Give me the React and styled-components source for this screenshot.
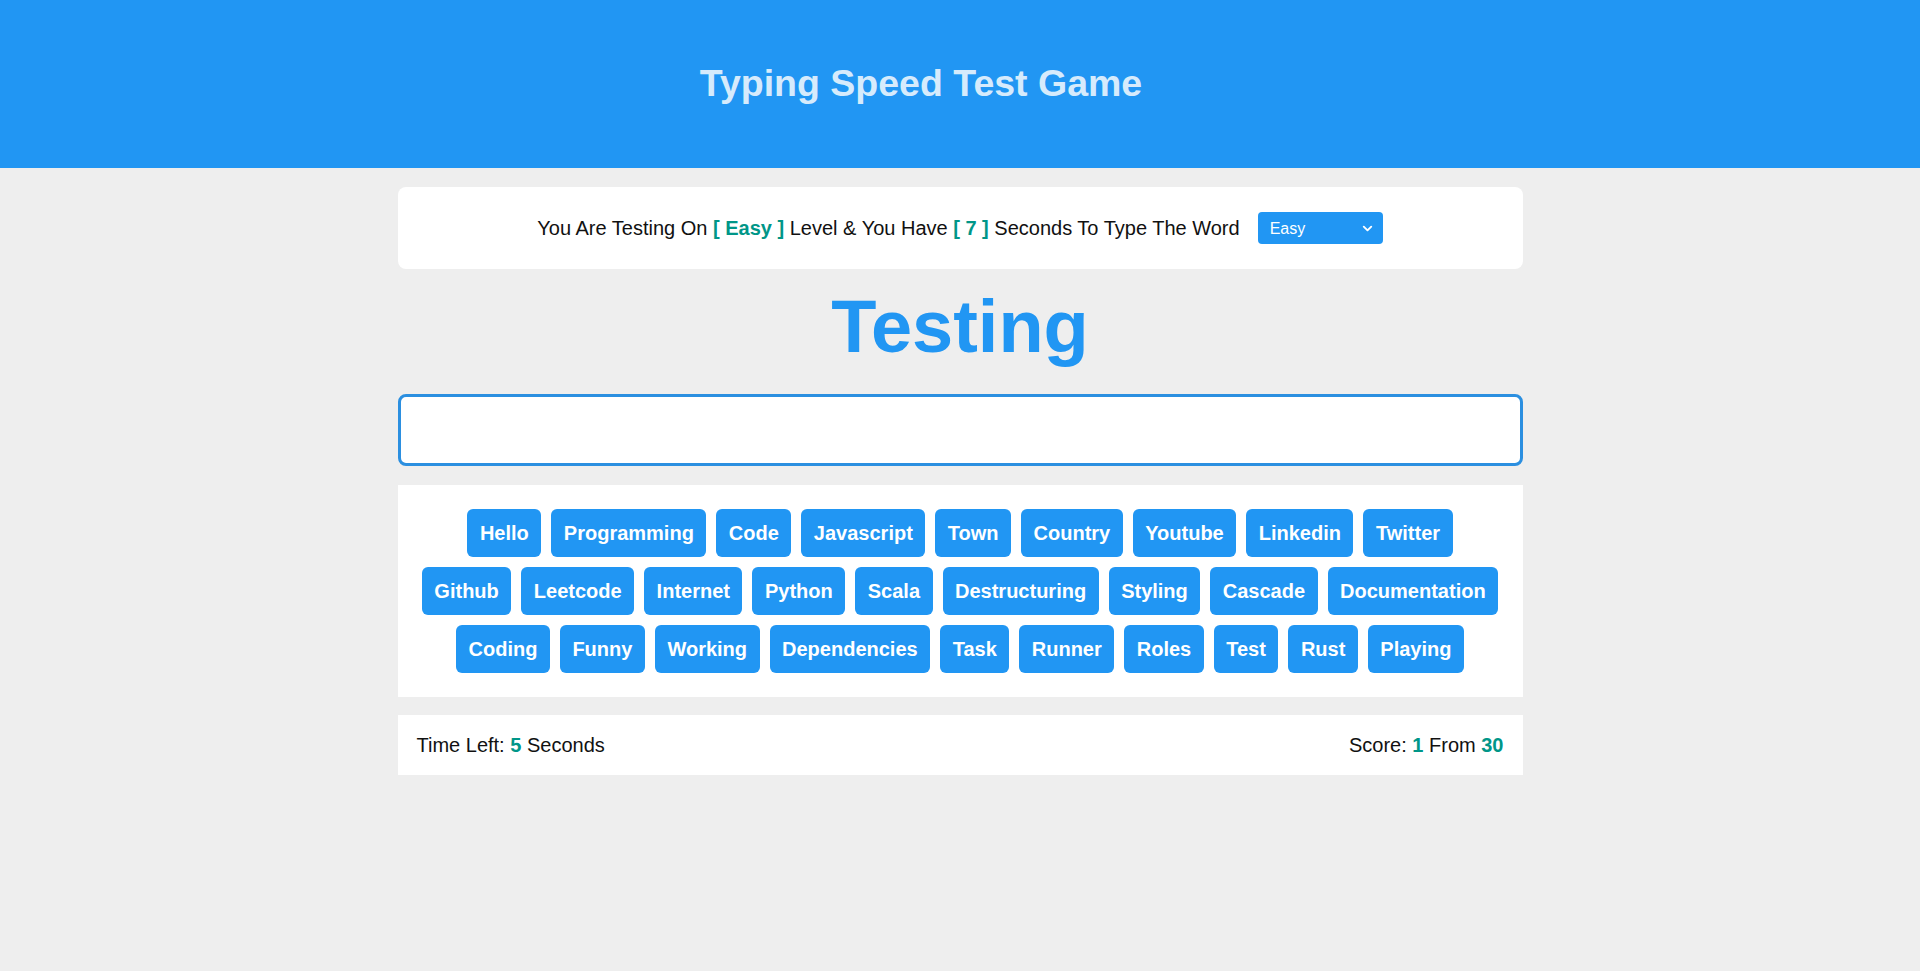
import styled, { createGlobalStyle } from "styled-components";
import { ChevronDown } from "lucide-react";

const FONT = '"Liberation Sans", Arial, Helvetica, sans-serif';

const rows = [
    ["Hello", "Programming", "Code", "Javascript", "Town", "Country", "Youtube", "Linkedin", "Twitter"],
    ["Github", "Leetcode", "Internet", "Python", "Scala", "Destructuring", "Styling", "Cascade", "Documentation"],
    ["Coding", "Funny", "Working", "Dependencies", "Task", "Runner", "Roles", "Test", "Rust", "Playing"],
];

const App = () => {
    return (
        <>
            <GlobalStyle />
            <Header>
                <Title>Typing Speed Test Game</Title>
            </Header>
            <Container>
                <MessageCard>
                    <span>
                        You Are Testing On <Mark>[ Easy ]</Mark> Level &amp; You Have <Mark>[ 7 ]</Mark> Seconds To Type The Word
                    </span>
                    <SelectWrap>
                        <LevelSelect defaultValue="easy">
                            <option value="easy">Easy</option>
                            <option value="normal">Normal</option>
                            <option value="hard">Hard</option>
                        </LevelSelect>
                        <Chevron>
                            <ChevronDown size={15} strokeWidth={3} />
                        </Chevron>
                    </SelectWrap>
                </MessageCard>

                <CurrentWord>Testing</CurrentWord>

                <TypeInput type="text" />

                <WordsBox>
                    {rows.map((row, i) => (
                        <WordRow key={i}>
                            {row.map((w) => (
                                <Word key={w}>{w}</Word>
                            ))}
                        </WordRow>
                    ))}
                </WordsBox>

                <StatusBar>
                    <span>Time Left: <Mark>5</Mark> Seconds</span>
                    <span>Score: <Mark>1</Mark> From <Mark>30</Mark></span>
                </StatusBar>
            </Container>
        </>
    );
};

const GlobalStyle = createGlobalStyle`
    body {
        margin: 0;
        background-color: #eeeeee;
        font-family: ${FONT};
        color: #111;
    }
`;

const Header = styled.header`
    box-sizing: border-box;
    height: 168px;
    background-color: #2196f3;
    display: flex;
    align-items: center;
    justify-content: center;
    padding: 0 78px 0 0;
`;

const Title = styled.h1`
    margin: 0;
    font-size: 37.5px;
    font-weight: bold;
    color: #d6ebfc;
    line-height: 1;
`;

const Container = styled.main`
    width: 1125px;
    margin: 19px auto 0;
    display: flex;
    flex-direction: column;
`;

const MessageCard = styled.div`
    height: 82px;
    background-color: #fff;
    border-radius: 8px;
    display: flex;
    align-items: center;
    justify-content: center;
    gap: 18px;
    font-size: 20px;
`;

const Mark = styled.span`
    color: #009688;
    font-weight: bold;
`;

const SelectWrap = styled.div`
    position: relative;
    display: flex;
`;

const LevelSelect = styled.select`
    appearance: none;
    width: 125px;
    height: 32px;
    border: none;
    border-radius: 4px;
    background-color: #2196f3;
    color: #fff;
    font-family: ${FONT};
    font-size: 16px;
    padding: 0 12px;
    outline: none;
`;

const Chevron = styled.span`
    position: absolute;
    right: 8px;
    top: 9px;
    color: #fff;
    display: flex;
    pointer-events: none;
`;

const CurrentWord = styled.div`
    margin: 21px 0 30px;
    text-align: center;
    font-size: 74px;
    line-height: 74px;
    font-weight: bold;
    color: #2196f3;
`;

const TypeInput = styled.input`
    box-sizing: border-box;
    height: 72px;
    width: 100%;
    border: 3px solid #2b8fe0;
    border-radius: 8px;
    background-color: #fff;
    outline: none;
    font-family: ${FONT};
    font-size: 20px;
    padding: 0 16px;
`;

const WordsBox = styled.div`
    margin-top: 19px;
    background-color: #fff;
    padding: 24px 0;
    display: flex;
    flex-direction: column;
    gap: 10px;
`;

const WordRow = styled.div`
    display: flex;
    justify-content: center;
    gap: 10px;
`;

const Word = styled.span`
    height: 48px;
    line-height: 48px;
    padding: 0 12.5px;
    border-radius: 6px;
    background-color: #2196f3;
    color: #fff;
    font-weight: bold;
    font-size: 20px;
`;

const StatusBar = styled.div`
    margin-top: 18px;
    height: 60px;
    background-color: #fff;
    display: flex;
    align-items: center;
    justify-content: space-between;
    padding: 0 19px;
    font-size: 20px;
`;

export default App;
